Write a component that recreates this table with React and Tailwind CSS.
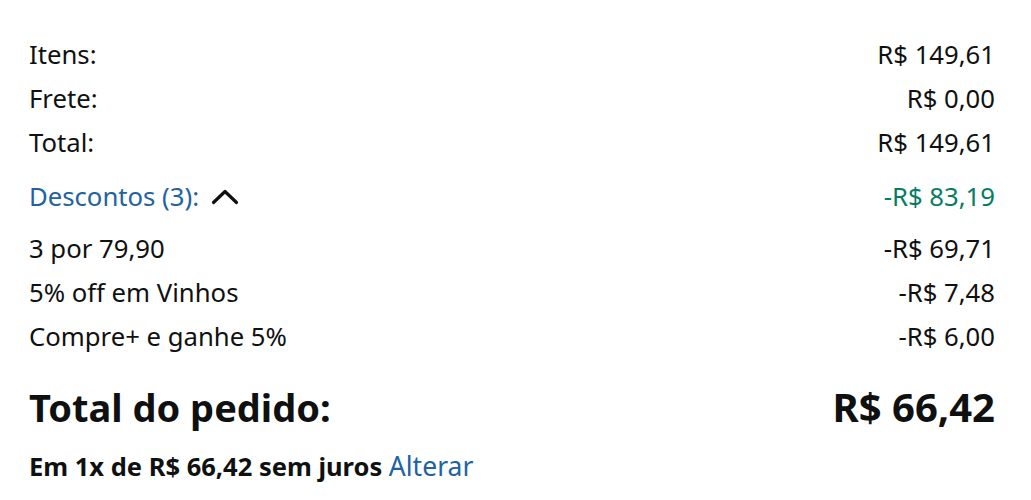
export default function App() {
  const rows = [
    ["Itens:", "R$ 149,61"],
    ["Frete:", "R$ 0,00"],
    ["Total:", "R$ 149,61"],
  ];
  const disc = [
    ["3 por 79,90", "-R$ 69,71"],
    ["5% off em Vinhos", "-R$ 7,48"],
    ["Compre+ e ganhe 5%", "-R$ 6,00"],
  ];
  return (
    <div className="w-[1031px] h-[500px] bg-white pl-[29px] pr-[36px] pt-[33px] text-[#0f1111] font-['Noto_Sans',sans-serif] text-[25.7px] leading-[44px]">
      {rows.map(([l, r]) => (
        <div key={l} className="flex justify-between h-[44px]">
          <span>{l}</span>
          <span>{r}</span>
        </div>
      ))}
      <div className="flex justify-between items-center h-[44px] mt-[10px]">
        <span className="flex items-center text-[#2162a1]">
          Descontos (3):
          <svg className="ml-[12px]" width="28" height="18" viewBox="0 0 28 18">
            <path d="M2.5 14.5 L14 3.5 L25.5 14.5" fill="none" stroke="#0f1111" strokeWidth="3.2" strokeLinecap="round" strokeLinejoin="round" />
          </svg>
        </span>
        <span className="text-[#067d62]">-R$ 83,19</span>
      </div>
      <div className="mt-[8px]">
        {disc.map(([l, r]) => (
          <div key={l} className="flex justify-between h-[44px]">
            <span>{l}</span>
            <span>{r}</span>
          </div>
        ))}
      </div>
      <div className="flex justify-between items-center font-bold text-[38px] leading-[50px] mt-[23px]">
        <span>Total do pedido:</span>
        <span className="text-[40px]">R$ 66,42</span>
      </div>
      <div className="mt-[16px] text-[25.5px] leading-[36px]">
        <span className="font-bold">Em 1x de R$ 66,42 sem juros</span>{" "}
        <span className="text-[#2162a1] text-[26.5px]">Alterar</span>
      </div>
    </div>
  );
}
